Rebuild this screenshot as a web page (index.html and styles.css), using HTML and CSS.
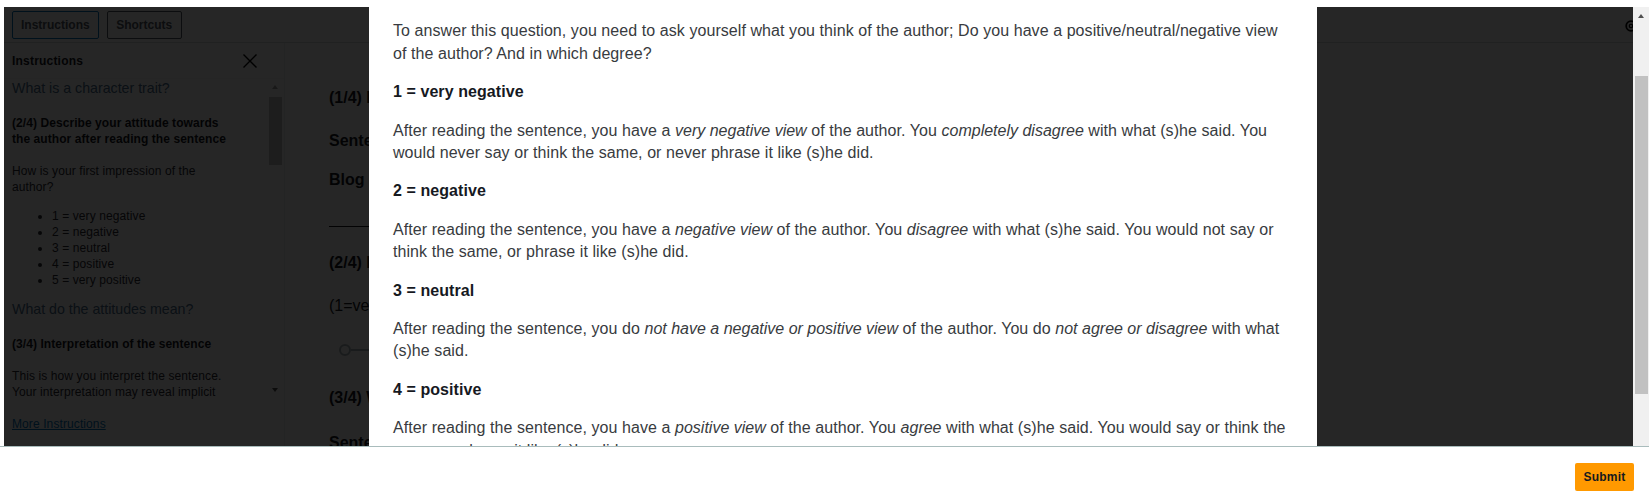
FILE: index.html
```html
<!DOCTYPE html>
<html lang="en">
<head>
<meta charset="utf-8">
<title>Instructions</title>
<link rel="stylesheet" href="styles.css">
</head>
<body>
<div class="app">
  <div class="toolbar">
    <button class="tab tab-active">Instructions</button>
    <button class="tab">Shortcuts</button>
    <svg class="gear" viewBox="0 0 16 16" width="14" height="14"><circle cx="8" cy="8" r="5.5" fill="none" stroke="#000" stroke-width="2"/><circle cx="8" cy="8" r="2" fill="none" stroke="#000" stroke-width="1.4"/></svg>
  </div>
  <div class="workspace">
    <aside class="side">
      <div class="side-head">
        <span class="side-title">Instructions</span>
        <svg class="close" viewBox="0 0 16 16" width="16" height="16"><path d="M1.5 1.5 14.5 14.5M14.5 1.5 1.5 14.5" stroke="#000" stroke-width="1.4" fill="none"/></svg>
      </div>
      <div class="side-scroll">
        <div class="side-text">
          <h4 class="side-link first">What is a character trait?</h4>
          <p class="side-b">(2/4) Describe your attitude towards the author after reading the sentence</p>
          <p class="side-p">How is your first impression of the author?</p>
          <ul class="side-list">
            <li>1 = very negative</li>
            <li>2 = negative</li>
            <li>3 = neutral</li>
            <li>4 = positive</li>
            <li>5 = very positive</li>
          </ul>
          <h4 class="side-link">What do the attitudes mean?</h4>
          <p class="side-b">(3/4) Interpretation of the sentence</p>
          <p class="side-p">This is how you interpret the sentence. Your interpretation may reveal implicit</p>
        </div>
        <div class="side-bar">
          <span class="arrow-up"></span>
          <span class="side-thumb"></span>
          <span class="arrow-down"></span>
        </div>
      </div>
      <a class="more" href="#">More Instructions</a>
    </aside>
    <main class="task">
      <p class="task-h t1">(1/4) Read the sentence</p>
      <p class="task-h t2">Sentence:</p>
      <p class="task-h t3">Blog post</p>
      <hr class="rule">
      <p class="task-h t4">(2/4) Describe your attitude</p>
      <p class="task-n">(1=very negative)</p>
      <div class="slider"><span class="knob"></span><span class="track"></span></div>
      <p class="task-h t5">(3/4) What do you think</p>
      <p class="task-h t6">Sentence:</p>
    </main>
  </div>
  <div class="overlay"></div>
  <div class="modal">
    <div class="modal-body">
      <p>To answer this question, you need to ask yourself what you think of the author; Do you have a positive/neutral/negative view of the author? And in which degree?</p>
      <p><strong>1 = very negative</strong></p>
      <p>After reading the sentence, you have a <em>very negative view</em> of the author. You <em>completely disagree</em> with what (s)he said. You would never say or think the same, or never phrase it like (s)he did.</p>
      <p><strong>2 = negative</strong></p>
      <p>After reading the sentence, you have a <em>negative view</em> of the author. You <em>disagree</em> with what (s)he said. You would not say or think the same, or phrase it like (s)he did.</p>
      <p><strong>3 = neutral</strong></p>
      <p>After reading the sentence, you do <em>not have a negative or positive view</em> of the author. You do <em>not agree or disagree</em> with what (s)he said.</p>
      <p><strong>4 = positive</strong></p>
      <p>After reading the sentence, you have a <em>positive view</em> of the author. You <em>agree</em> with what (s)he said. You would say or think the same, or phrase it like (s)he did.</p>
    </div>
  </div>
  <div class="page-bar">
    <span class="page-up"></span>
    <span class="page-thumb"></span>
  </div>
</div>
<footer class="footer">
  <button class="submit">Submit</button>
</footer>
</body>
</html>
```

FILE: styles.css
```css
* { box-sizing: border-box; }
html, body { margin: 0; height: 497px; overflow: hidden; background: #fff; }
body { padding: 7px 0 0 4px; font-family: "Liberation Sans", Arial, sans-serif; color: #16191f; }
p { margin: 0; }

.app { position: relative; height: 439px; overflow: hidden; background: #fff; }

.toolbar { height: 36px; display: flex; align-items: flex-start; gap: 8px; padding: 4px 8px 0; border-bottom: 1px solid #d5dbdb; position: relative; }
.tab { height: 28px; padding: 0 8.5px; border: 1px solid #545b64; border-radius: 2px; background: #fff; color: #545b64; font: bold 12px "Liberation Sans", Arial, sans-serif; }
.tab-active { border-color: #0073bb; padding: 0 8px; }
.gear { position: absolute; right: 11px; top: 12px; }

.workspace { display: flex; height: 403px; }
.side { width: 281px; flex: none; border-right: 1px solid #eaeded; position: relative; }
.side-head { height: 36px; display: flex; align-items: center; justify-content: space-between; padding: 0 26px 0 8px; border-bottom: 1px solid #f4f6f6; }
.side-title { font-size: 12px; font-weight: bold; letter-spacing: .2px; }
.close { display: block; }
.side-scroll { height: 320px; display: flex; overflow: hidden; }
.side-text { width: 265px; flex: none; padding: 0 30px 0 8px; font-size: 12px; line-height: 16px; overflow: hidden; color: #2a2d33; }
.side-link { margin: 0; padding-top: 13px; padding-bottom: 19px; font-size: 14.2px; line-height: 16px; font-weight: normal; color: #4a6d8c; }
.side-link.first { padding-top: 1px; padding-bottom: 19px; }
.side-b { font-weight: bold; margin-bottom: 16px; letter-spacing: .07px; color: #16191f; }
.side-p { margin-bottom: 13px; letter-spacing: .1px; }
.side-list { margin: 0; padding-left: 40px; letter-spacing: .1px; }
.side-bar { width: 14px; flex: none; position: relative; margin-left: 0; }
.side-thumb { display: block; position: absolute; top: 18px; left: 0; width: 13px; height: 68px; background: #c1c1c1; }
.arrow-up, .arrow-down { position: absolute; left: 3px; width: 0; height: 0; border-left: 3.5px solid transparent; border-right: 3.5px solid transparent; }
.arrow-up { top: 6px; border-bottom: 4px solid #a3a3a3; }
.arrow-down { top: 309px; border-top: 4px solid #505050; }
.more { position: absolute; left: 8px; top: 373px; font-size: 12px; line-height: 16px; color: #0073bb; letter-spacing: .1px; }

.task { flex: 1; position: relative; padding-left: 44px; font-size: 16px; }
.task-h { font-weight: bold; line-height: 24px; }
.t1 { margin-top: 43px; }
.t2 { margin-top: 19px; }
.t3 { margin-top: 15px; }
.rule { margin: 34px 0 0; width: 300px; border: 0; border-top: 1px solid #16191f; }
.t4 { margin-top: 24px; }
.task-n { margin-top: 19px; line-height: 24px; color: #16191f; }
.slider { display: flex; align-items: center; margin: 26px 0 0 10px; height: 12px; }
.knob { width: 12px; height: 12px; border: 2px solid #aab7b8; border-radius: 50%; flex: none; }
.track { height: 2px; width: 200px; background: #aab7b8; }
.t5 { margin-top: 30px; }
.t6 { margin-top: 21px; }

.overlay { position: absolute; left: 0; top: 0; right: 16px; bottom: 0; background: rgba(0,0,0,.85); }
.modal { position: absolute; left: 365px; top: 0; width: 948px; bottom: 0; background: #fff; overflow: hidden; }
.modal-body { padding: 13.4px 24px 0; font-size: 16px; line-height: 22.4px; color: #383b40; letter-spacing: .07px; }
.modal-body p { margin-bottom: 16px; }
.modal-body em { letter-spacing: 0; }
.modal-body strong { font-weight: bold; color: #16191f; }

.page-bar { position: absolute; top: 0; right: 0; bottom: 0; width: 16px; background: #f0f0f0; }
.page-up { position: absolute; top: 7px; left: 5px; width: 0; height: 0; border-left: 3.5px solid transparent; border-right: 3.5px solid transparent; border-bottom: 4px solid #505050; }
.page-thumb { position: absolute; top: 69px; left: 2px; width: 13px; height: 318px; background: #c1c1c1; }

.footer { margin-left: -4px; height: 51px; border-top: 1px solid #a9bcbc; display: flex; justify-content: flex-end; padding: 16px 15px 0 0; }
.submit { width: 59px; height: 28px; border: 0; border-radius: 2px; background: #ff9900; color: #16191f; font: bold 12px "Liberation Sans", Arial, sans-serif; letter-spacing: .2px; }
```
